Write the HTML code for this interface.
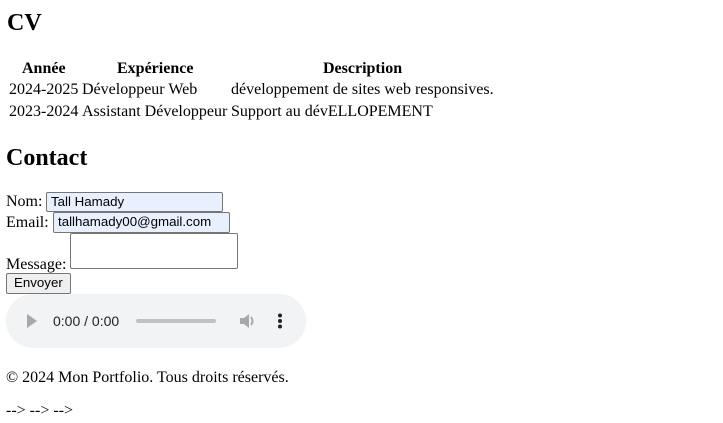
<!DOCTYPE html>
<html><head><meta charset="utf-8"><style>
body{margin:0;width:723px;height:423px;position:relative;font-family:"Liberation Serif",serif;font-size:16px;color:#000;background:#fff;overflow:hidden}
.a{position:absolute;white-space:nowrap;line-height:18px}
h2{position:absolute;margin:0;font-size:24px;line-height:28px}
.in{position:absolute;box-sizing:border-box;border:1px solid #767676;border-radius:2px;background:#e8f0fe;font-family:"Liberation Sans",sans-serif;font-size:13.3px;padding:1px 4px;line-height:16px}
</style></head><body>
<h2 style="left:7px;top:9px">CV</h2>
<div class="a" style="left:22px;top:60px;font-weight:bold">Année</div>
<div class="a" style="left:117px;top:60px;font-weight:bold">Expérience</div>
<div class="a" style="left:323px;top:60px;font-weight:bold">Description</div>
<div class="a" style="left:9px;top:81px">2024-2025</div>
<div class="a" style="left:82px;top:81px">Développeur Web</div>
<div class="a" style="left:231px;top:81px">développement de sites web responsives.</div>
<div class="a" style="left:9px;top:103px">2023-2024</div>
<div class="a" style="left:82px;top:103px">Assistant Développeur</div>
<div class="a" style="left:231px;top:103px">Support au dévELLOPEMENT</div>
<h2 style="left:6px;top:144px">Contact</h2>
<div class="a" style="left:6px;top:193px">Nom:</div>
<div class="in" style="left:46px;top:192px;width:177px;height:20px">Tall Hamady</div>
<div class="a" style="left:6px;top:214px">Email:</div>
<div class="in" style="left:53px;top:212px;width:177px;height:21px">tallhamady00@gmail.com</div>
<div class="a" style="left:6px;top:256px">Message:</div>
<div class="in" style="left:70px;top:233px;width:168px;height:36px;background:#fff"></div>
<div class="in" style="left:6px;top:273px;width:65px;height:21px;background:#efefef;color:#000;padding:1px 7px">Envoyer</div>
<div style="position:absolute;left:6px;top:294px;width:300px;height:54px;border-radius:27px;background:#f1f3f4"></div>
<svg style="position:absolute;left:26px;top:313px" width="12" height="16"><path d="M1 1 L11 8 L1 15Z" fill="#a8a8a8"/></svg>
<div class="a" style="left:53px;top:312px;font-family:'Liberation Sans',sans-serif;font-size:14px;color:#222">0:00 / 0:00</div>
<div style="position:absolute;left:136px;top:319px;width:80px;height:4px;border-radius:2px;background:#c1c1c1"></div>
<svg style="position:absolute;left:239px;top:313px" width="18" height="16"><path d="M1 5h4l5-4v14l-5-4H1z" fill="#a8a8a8"/><path d="M12 4q3 4 0 8" stroke="#a8a8a8" stroke-width="2" fill="none"/></svg>
<svg style="position:absolute;left:277px;top:313px" width="6" height="16"><circle cx="3" cy="2.5" r="2" fill="#222"/><circle cx="3" cy="8" r="2" fill="#222"/><circle cx="3" cy="13.5" r="2" fill="#222"/></svg>
<div class="a" style="left:6px;top:369px">© 2024 Mon Portfolio. Tous droits réservés.</div>
<div class="a" style="left:6px;top:402px">--&gt; --&gt; --&gt;</div>
</body></html>
